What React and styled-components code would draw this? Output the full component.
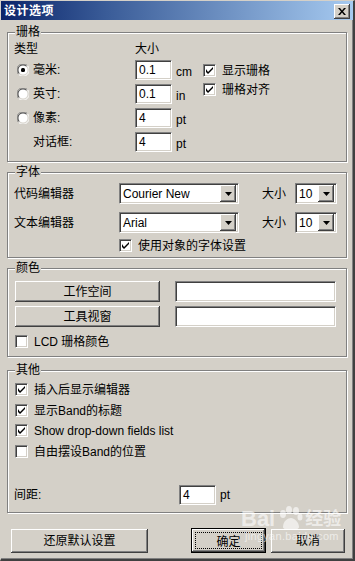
import React from 'react';
import styled, { createGlobalStyle, css } from 'styled-components';

const GlobalStyle = createGlobalStyle`
  html, body { margin: 0; padding: 0; background: #d4d0c8; }
  body {
    font-family: "Liberation Sans", "Noto Sans CJK SC", sans-serif;
    font-size: 12px;
    color: #000;
  }
  * { box-sizing: border-box; }
`;

const raised = css`
  background: #d4d0c8;
  border: none;
  box-shadow: inset -1px -1px #404040, inset 1px 1px #fff,
    inset -2px -2px #808080, inset 2px 2px #d4d0c8;
`;

const sunken = css`
  background: #fff;
  border: 1px solid;
  border-color: #808080 #fff #fff #808080;
  box-shadow: inset 1px 1px #404040, inset -1px -1px #d4d0c8;
`;

const Window = styled.div`
  position: relative;
  width: 355px;
  height: 561px;
  background: #d4d0c8;
  border-left: 1px solid #d4d0c8;
  border-top: 1px solid #d4d0c8;
  border-right: 2px solid #404040;
  border-bottom: 2px solid #404040;
  box-shadow: inset -1px -1px #808080;
  display: flex;
  flex-direction: column;
`;

const TitleBar = styled.div`
  height: 19px;
  display: flex;
  align-items: center;
  justify-content: space-between;
  padding: 0 3px 0 3px;
  background: linear-gradient(to right, #0a246a, #3a5c98 30%, #a6caf0);
`;

const Title = styled.span`
  color: #fff;
  font-weight: bold;
  font-size: 12px;
  line-height: 14px;
  letter-spacing: 0.5px;
`;

const CloseButton = styled.div`
  ${raised};
  width: 16px;
  height: 15px;
  display: flex;
  align-items: center;
  justify-content: center;
  margin-top: 1px;
`;

const Body = styled.div`
  flex: 1;
  display: flex;
  flex-direction: column;
  padding: 12px 5px 0 6px;
`;

const Group = styled.div`
  position: relative;
  border: 1px solid #808080;
  box-shadow: inset 1px 1px #fff, 1px 1px #fff;
  height: ${p => p.$h}px;
  margin-bottom: ${p => p.$mb || 0}px;
  padding: ${p => p.$pad};
  width: 340px;
`;

const Legend = styled.span`
  position: absolute;
  top: -8px;
  left: 7px;
  padding: 0 1px;
  background: #d4d0c8;
  line-height: 14px;
`;

const Text = styled.span`
  line-height: 14px;
  white-space: nowrap;
  width: ${p => (p.$w ? `${p.$w}px` : 'auto')};
  flex: none;
  padding-left: ${p => p.$pl || 0}px;
`;

const GridRow = styled.div`
  display: flex;
  align-items: center;
  height: ${p => p.$h || 20}px;
  margin-top: ${p => p.$mt || 0}px;
`;

const Field = styled.div`
  ${sunken};
  width: ${p => p.$w}px;
  height: ${p => p.$h || 20}px;
  flex: none;
  display: flex;
  align-items: center;
  padding-left: 3px;
  line-height: 14px;
`;

const Unit = styled.span`
  margin-left: 4px;
  padding-top: 4px;
  line-height: 14px;
`;

const GridTop = styled.div`
  display: flex;
`;

const LeftCol = styled.div`
  width: 189px;
  display: flex;
  flex-direction: column;
`;

const RightCol = styled.div`
  display: flex;
  flex-direction: column;
  gap: 6px;
  padding-top: 22px;
`;

const CheckRow = styled.label`
  display: flex;
  align-items: center;
  height: 13px;
  gap: 6px;
  margin-top: ${p => p.$mt || 0}px;
  margin-left: ${p => p.$ml || 0}px;
`;

const Box = styled.span`
  ${sunken};
  width: 13px;
  height: 13px;
  flex: none;
  display: flex;
  align-items: center;
  justify-content: center;
`;

const Combo = styled.div`
  ${sunken};
  width: ${p => p.$w}px;
  height: 21px;
  flex: none;
  display: flex;
  align-items: center;
  justify-content: space-between;
  padding: 2px 2px 2px 3px;
`;

const DropBtn = styled.span`
  ${raised};
  width: 16px;
  height: 17px;
  display: flex;
  align-items: center;
  justify-content: center;
`;

const Button = styled.div`
  ${raised};
  width: ${p => p.$w}px;
  height: ${p => p.$h || 21}px;
  flex: none;
  display: flex;
  align-items: center;
  justify-content: center;
  line-height: 14px;
`;

const DefaultButton = styled.div`
  width: ${p => p.$w}px;
  height: 25px;
  border: 1px solid #000;
  display: flex;
  flex: none;
  margin-top: -1px;
`;

const DefaultInner = styled.div`
  ${raised};
  flex: 1;
  display: flex;
  align-items: center;
  justify-content: center;
  padding: 3px;
`;

const Focus = styled.div`
  flex: 1;
  align-self: stretch;
  border: 1px dotted #000;
  display: flex;
  align-items: center;
  justify-content: center;
`;

const ColorRow = styled.div`
  display: flex;
  gap: 15px;
  margin-bottom: 4px;
`;

const Footer = styled.div`
  display: flex;
  align-items: center;
  padding: 16px 0 0 4px;
`;

const Watermark = styled.div`
  position: absolute;
  left: 240px;
  top: 505px;
  color: rgba(255, 255, 255, 0.6);
  pointer-events: none;
  display: flex;
  flex-direction: column;
`;

const WmTop = styled.div`
  display: flex;
  align-items: flex-end;
  gap: 2px;
  font-size: 22px;
  font-weight: bold;
  line-height: 22px;
`;

const WmSub = styled.div`
  font-size: 11px;
  line-height: 12px;
  padding-left: 4px;
  letter-spacing: 0.3px;
`;

const Check = () => (
  <svg width="7" height="7" viewBox="0 0 7 7">
    <path d="M0 2v3l2 2 5-5V0L2 5z" fill="#000" />
  </svg>
);

const CheckBox = ({ checked, children, mt, ml }) => (
  <CheckRow $mt={mt} $ml={ml}>
    <Box>{checked && <Check />}</Box>
    <Text>{children}</Text>
  </CheckRow>
);

const Radio = ({ checked }) => (
  <svg width="12" height="12" viewBox="0 0 12 12" style={{ flex: 'none' }}>
    <circle cx="6" cy="6" r="5.5" fill="#fff" />
    <path d="M1.6 10.4A6 6 0 0 1 10.4 1.6" stroke="#808080" strokeWidth="1" fill="none" />
    <path d="M2.4 9.6A4.8 4.8 0 0 1 9.6 2.4" stroke="#404040" strokeWidth="1" fill="none" />
    <path d="M10.4 1.6A6 6 0 0 1 1.6 10.4" stroke="#fff" strokeWidth="1" fill="none" />
    <path d="M9.6 2.4A4.8 4.8 0 0 1 2.4 9.6" stroke="#d4d0c8" strokeWidth="1" fill="none" />
    {checked && <rect x="4" y="4" width="4" height="4" rx="1.5" fill="#000" />}
  </svg>
);

const Arrow = () => (
  <svg width="7" height="4" viewBox="0 0 7 4">
    <path d="M0 0h7L3.5 4z" fill="#000" />
  </svg>
);

const RadioRow = ({ checked, label, value, unit, radio = true }) => (
  <GridRow $mt={4}>
    <Text $w={121} $pl={radio ? 3 : 19} style={{ display: 'flex', alignItems: 'center', gap: 4 }}>
      {radio && <Radio checked={checked} />}
      {label}
    </Text>
    <Field $w={37}>{value}</Field>
    <Unit>{unit}</Unit>
  </GridRow>
);

const FontRow = ({ label, font, mt }) => (
  <GridRow $h={21} $mt={mt}>
    <Text $w={105}>{label}</Text>
    <Combo $w={120}>
      <span>{font}</span>
      <DropBtn><Arrow /></DropBtn>
    </Combo>
    <Text $w={56} $pl={23}>大小</Text>
    <Combo $w={42}>
      <span>10</span>
      <DropBtn><Arrow /></DropBtn>
    </Combo>
  </GridRow>
);

export default function App() {
  return (
    <>
      <GlobalStyle />
      <Window>
        <TitleBar>
          <Title>设计选项</Title>
          <CloseButton>
            <svg width="8" height="7" viewBox="0 0 8 7">
              <path d="M0 0h2l2 2.5L6 0h2L5 3.5 8 7H6L4 4.5 2 7H0l3-3.5z" fill="#000" />
            </svg>
          </CloseButton>
        </TitleBar>
        <Body>
          <Group $h={130} $mb={10} $pad="9px 0 0 6px">
            <Legend>珊格</Legend>
            <GridTop>
              <LeftCol>
                <GridRow $h={14}>
                  <Text $w={121}>类型</Text>
                  <Text>大小</Text>
                </GridRow>
                <RadioRow checked label="毫米:" value="0.1" unit="cm" />
                <RadioRow label="英寸:" value="0.1" unit="in" />
                <RadioRow label="像素:" value="4" unit="pt" />
                <RadioRow radio={false} label="对话框:" value="4" unit="pt" />
              </LeftCol>
              <RightCol>
                <CheckBox checked>显示珊格</CheckBox>
                <CheckBox checked>珊格对齐</CheckBox>
              </RightCol>
            </GridTop>
          </Group>

          <Group $h={86} $mb={10} $pad="10px 0 0 6px">
            <Legend>字体</Legend>
            <FontRow label="代码编辑器" font="Courier New" />
            <FontRow label="文本编辑器" font="Arial" mt={8} />
            <CheckBox checked mt={6} ml={105}>使用对象的字体设置</CheckBox>
          </Group>

          <Group $h={89} $mb={13} $pad="12px 0 0 7px">
            <Legend>颜色</Legend>
            <ColorRow>
              <Button $w={145}>工作空间</Button>
              <Field $w={161} $h={21} />
            </ColorRow>
            <ColorRow>
              <Button $w={145}>工具视窗</Button>
              <Field $w={161} $h={21} />
            </ColorRow>
            <CheckBox mt={8}>LCD 珊格颜色</CheckBox>
          </Group>

          <Group $h={143} $pad="12px 0 0 7px">
            <Legend>其他</Legend>
            <CheckBox checked>插入后显示编辑器</CheckBox>
            <CheckBox checked mt={8}>显示Band的标题</CheckBox>
            <CheckBox checked mt={7}>Show drop-down fields list</CheckBox>
            <CheckBox mt={8}>自由摆设Band的位置</CheckBox>
            <GridRow $mt={27} style={{ marginLeft: -1 }}>
              <Text $w={165}>间距:</Text>
              <Field $w={37}>4</Field>
              <Unit style={{ paddingTop: 0 }}>pt</Unit>
            </GridRow>
          </Group>

          <Footer>
            <Button $w={137} $h={24}>还原默认设置</Button>
            <DefaultButton $w={75} style={{ marginLeft: 43 }}>
              <DefaultInner><Focus>确定</Focus></DefaultInner>
            </DefaultButton>
            <Button $w={74} $h={24} style={{ marginLeft: 5 }}>取消</Button>
          </Footer>
        </Body>
        <Watermark>
          <WmTop>
            <span>Bai</span>
            <svg width="26" height="24" viewBox="0 0 26 24">
              <g fill="rgba(255,255,255,0.6)">
                <ellipse cx="6" cy="8" rx="3" ry="4" />
                <ellipse cx="12" cy="4" rx="3" ry="4" />
                <ellipse cx="19" cy="5" rx="3" ry="4" />
                <ellipse cx="23" cy="11" rx="2.5" ry="3.5" />
                <path d="M6 21c0-6 5-9 8-9s8 4 8 9c0 2-3 3-8 3s-8-1-8-3z" />
              </g>
            </svg>
            <span style={{ fontSize: 18 }}>经验</span>
          </WmTop>
          <WmSub>jingyan.baidu.com</WmSub>
        </Watermark>
      </Window>
    </>
  );
}
